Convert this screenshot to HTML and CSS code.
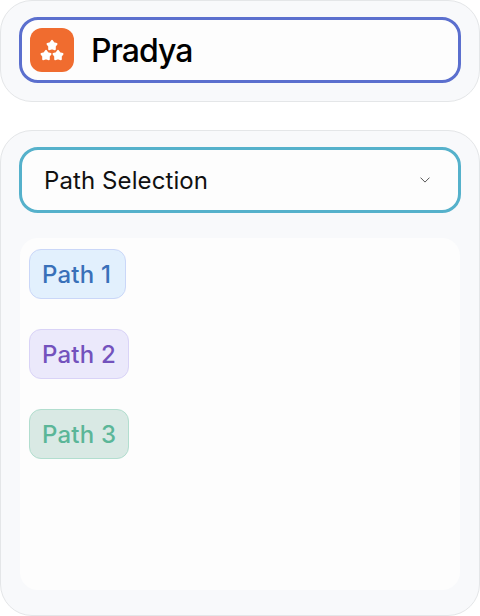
FILE: index.html
```html
<!DOCTYPE html>
<html lang="en">

<head>
    <meta charset="UTF-8" />
    <meta name="viewport" content="width=device-width, initial-scale=1.0" />
    <title>Pradya</title>
    <link rel="stylesheet" href="styles.css">
</head>

<body>

    <!-- Header -->
    <header class="card header-card">
        <div class="field brand">
            <div class="logo">
                <svg width="44" height="44" viewBox="0 0 44 44">
                    <defs>
                        <path id="star" d="M0 -4.5 L1.7 -2.2 L4.6 -1.4 L2.9 1 L2.9 4 L0 3.2 L-2.9 4 L-2.9 1 L-4.6 -1.4 L-1.7 -2.2 Z" />
                    </defs>
                    <g fill="#fff" stroke="#fff" stroke-width="1.8" stroke-linejoin="round">
                        <use href="#star" x="22" y="17.3" />
                        <use href="#star" x="16" y="27.3" />
                        <use href="#star" x="28" y="27.3" />
                    </g>
                </svg>
            </div>
            <h1>Pradya</h1>
        </div>
    </header>

    <!-- Path list -->
    <main class="card path-card">
        <button class="field select">
            <span>Path Selection</span>
            <svg class="chevron" width="10" height="6" viewBox="0 0 10 6">
                <path d="M0.5 0.6 L5 5.1 L9.5 0.6" />
            </svg>
        </button>
        <div class="panel">
            <span class="tag blue">Path 1</span>
            <span class="tag purple">Path 2</span>
            <span class="tag green">Path 3</span>
        </div>
    </main>

</body>

</html>
```

FILE: styles.css
```css
* {
    box-sizing: border-box;
}

body {
    margin: 0;
    height: 616px;
    display: flex;
    flex-direction: column;
    gap: 28px;
    background-color: #fff;
    font-family: Inter, sans-serif;
    overflow: hidden;
}

.card {
    width: 480px;
    background-color: #f8f9fb;
    border: 1px solid #e4e6e8;
    border-radius: 32px;
    padding: 16px 18px;
}

.header-card {
    height: 102px;
}

.path-card {
    height: 486px;
    display: flex;
    flex-direction: column;
    align-items: center;
    gap: 25px;
    padding: 16px 18px 25px;
}

.field {
    width: 442px;
    height: 66px;
    display: flex;
    align-items: center;
    background-color: #fdfdfd;
    border: 3px solid;
    border-radius: 19px;
}

.brand {
    gap: 17px;
    padding: 0 8px;
    border-color: #5b6fce;
}

.logo {
    width: 44px;
    height: 44px;
    border-radius: 12px;
    background-color: #f06c2f;
}

.logo svg {
    display: block;
}

h1 {
    margin: 2px 0 0;
    font-size: 32px;
    font-weight: 500;
    line-height: 40px;
    letter-spacing: -1px;
    color: #000;
}

.select {
    flex-shrink: 0;
    justify-content: space-between;
    padding: 0 28px 0 22px;
    border-color: #55b1cb;
    font-family: inherit;
    font-size: 24px;
    letter-spacing: 0.1px;
    color: #111;
    cursor: pointer;
}

.chevron {
    fill: none;
    stroke: #555;
    stroke-width: 1;
}

.panel {
    width: 440px;
    flex: 1;
    display: flex;
    flex-direction: column;
    align-items: flex-start;
    gap: 30px;
    padding: 11px 9px;
    border-radius: 18px;
    background-color: #fdfdfd;
}

.tag {
    min-width: 97px;
    height: 50px;
    padding: 0 12px;
    border: 1px solid;
    border-radius: 12px;
    font-size: 24px;
    font-weight: 500;
    line-height: 49px;
    letter-spacing: 0.2px;
}

.blue {
    background-color: #e2f0fd;
    border-color: #cad7f8;
    color: #3970b9;
}

.purple {
    background-color: #ebe9fb;
    border-color: #d9d3f7;
    color: #7352bd;
}

.green {
    background-color: #d9e9e4;
    border-color: #b2decf;
    color: #5bb698;
}
```
